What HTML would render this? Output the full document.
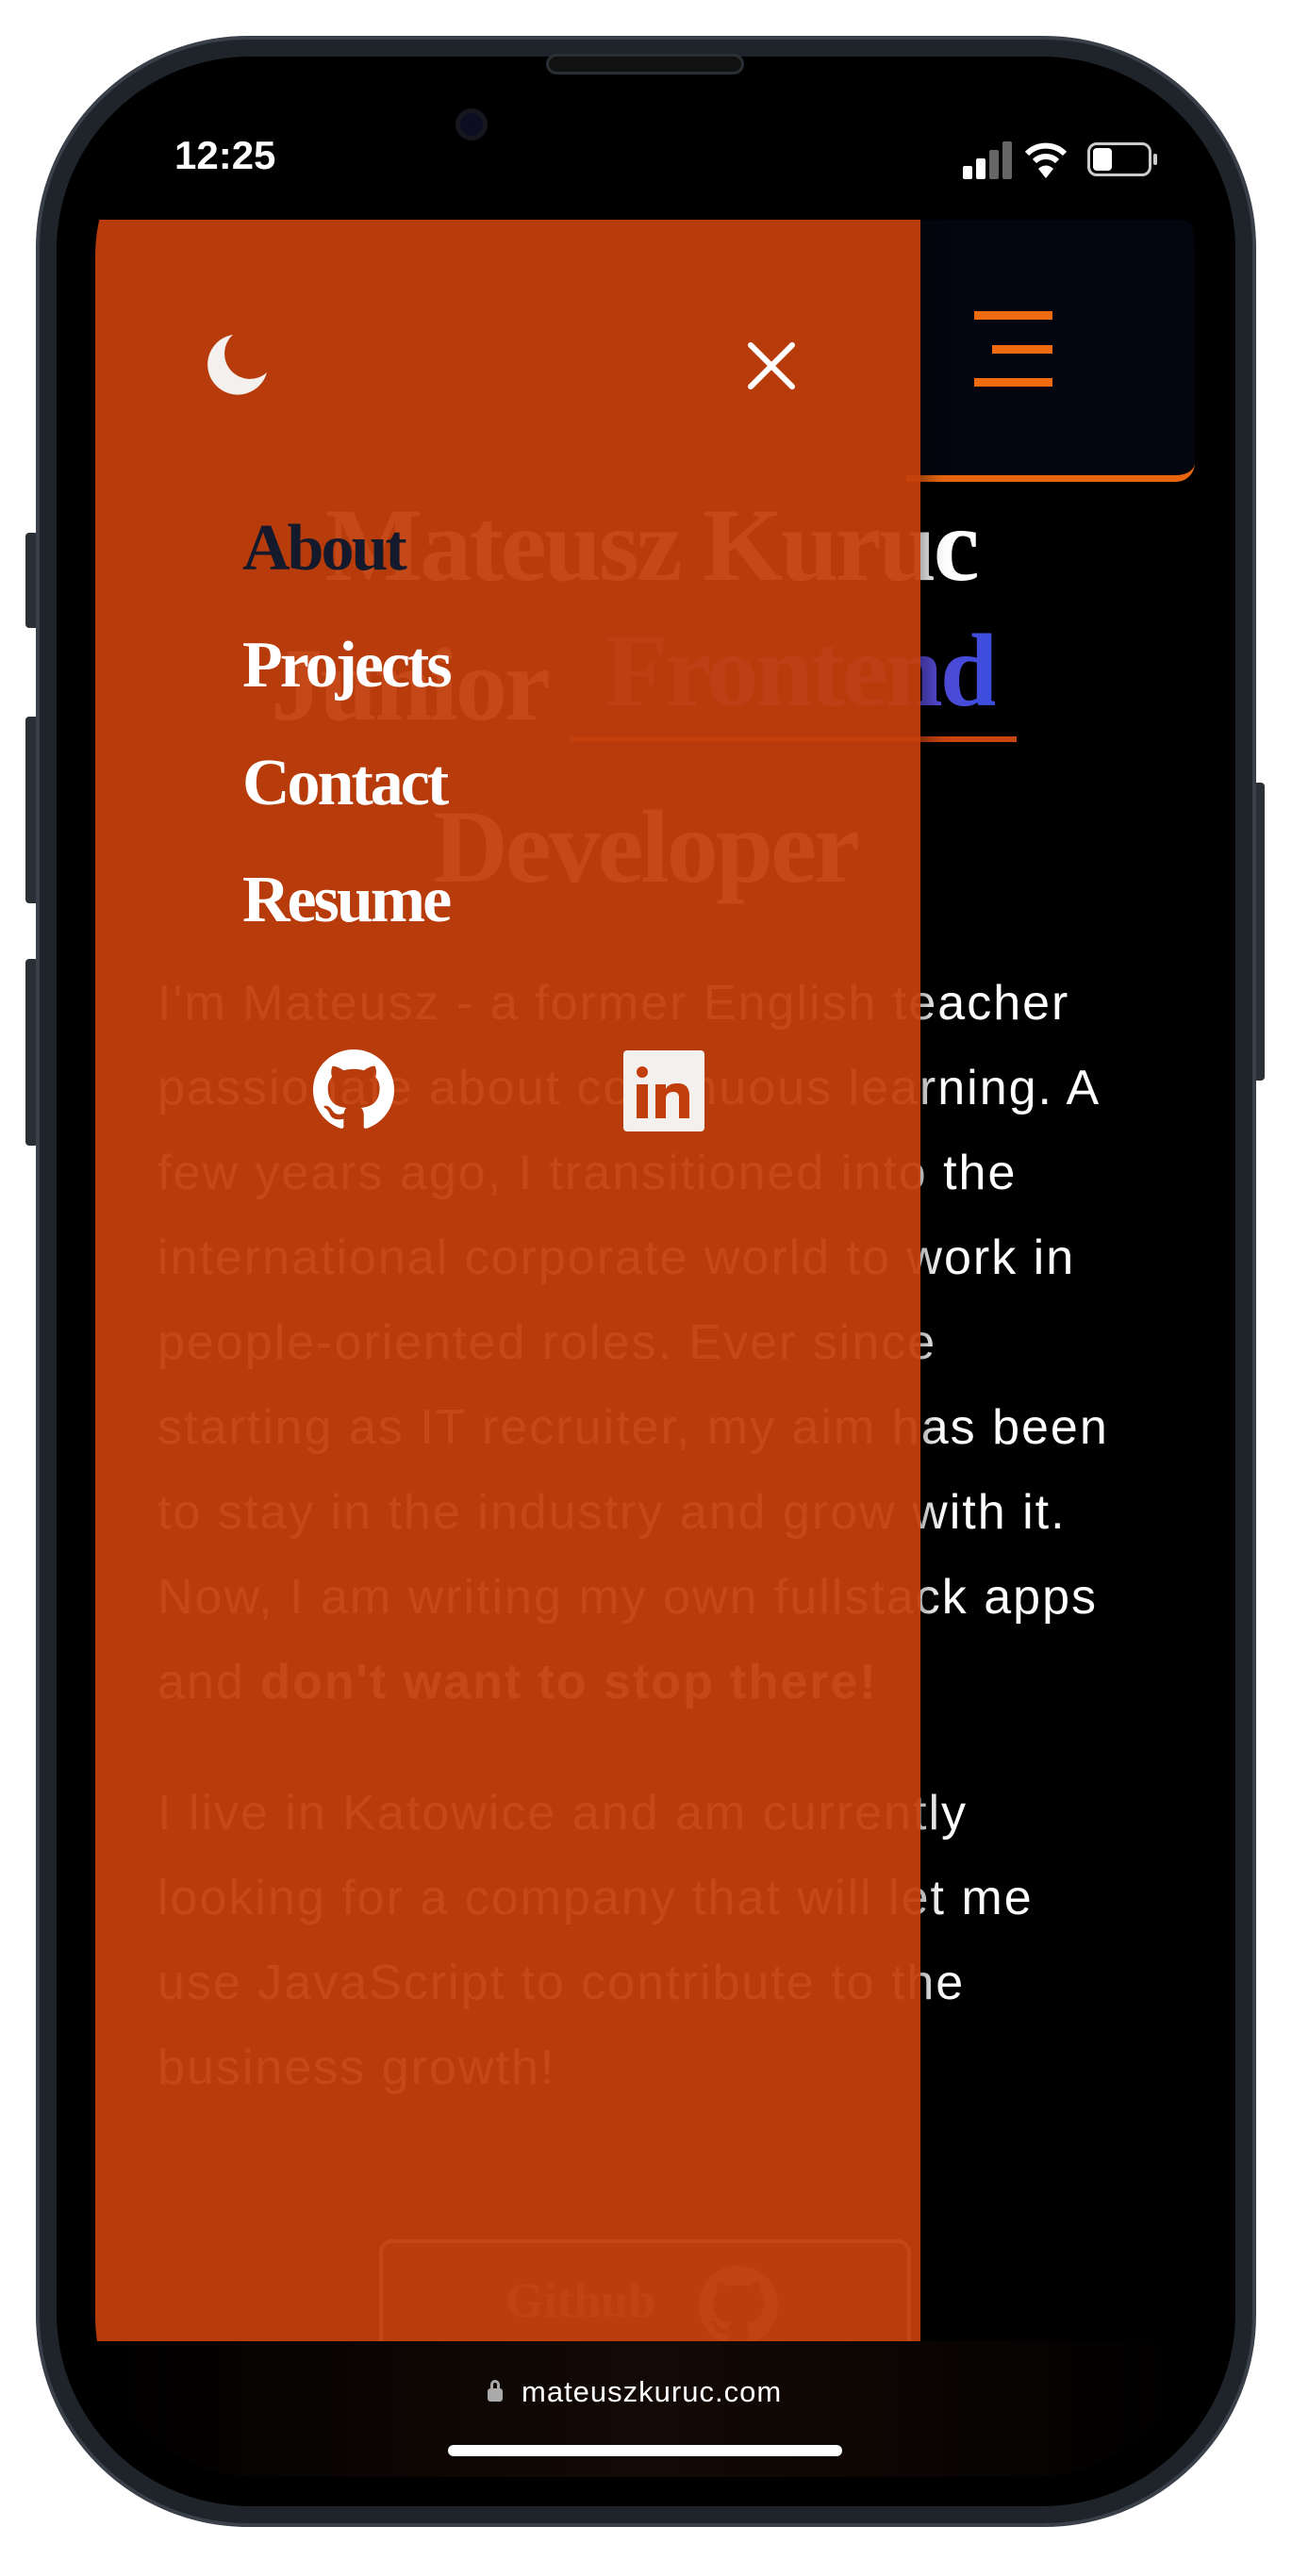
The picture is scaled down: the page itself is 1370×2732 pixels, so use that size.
<!DOCTYPE html>
<html><head><meta charset="utf-8"><style>
*{margin:0;padding:0;box-sizing:border-box}
body{width:1370px;height:2732px;background:#fff;position:relative;overflow:hidden;font-family:"Liberation Sans",sans-serif}
.abs{position:absolute}
.frame{left:38px;top:38px;width:1294px;height:2642px;border-radius:225px;background:#1f242b;border:4px solid #3a4049}
.bezel{left:60px;top:60px;width:1250px;height:2598px;border-radius:205px;background:#000}
.screen{left:101px;top:101px;width:1166px;height:2526px;border-radius:170px;background:#000;overflow:hidden}
.serif{font-family:"Liberation Serif",serif;font-weight:bold}
.hero{width:1166px;left:0;text-align:center;color:#fff;font-size:110px;letter-spacing:-3px;line-height:1}
.p{left:66px;color:#fff;font-family:"Liberation Sans",sans-serif;font-size:52px;letter-spacing:2px;white-space:nowrap;line-height:90px}
.menu{left:156px;font-size:70px;color:#fff;letter-spacing:-3px;line-height:1}
</style></head><body>
<div class="abs" style="left:27px;top:565px;width:14px;height:101px;background:#2a2f36;border-radius:4px"></div>
<div class="abs" style="left:27px;top:760px;width:14px;height:198px;background:#2a2f36;border-radius:4px"></div>
<div class="abs" style="left:27px;top:1017px;width:14px;height:198px;background:#2a2f36;border-radius:4px"></div>
<div class="abs" style="left:1329px;top:830px;width:12px;height:316px;background:#2a2f36;border-radius:4px"></div>
<div class="abs frame"></div>
<div class="abs bezel"></div>
<div class="abs" style="left:579px;top:57px;width:210px;height:22px;border-radius:11px;background:#111;border:3px solid #2a2f36"></div>
<div class="abs screen">
  <div class="abs" style="left:84px;top:40px;color:#fff;font-size:42px;font-weight:bold">12:25</div>
  <div class="abs" style="left:920px;top:75px;width:10px;height:14px;background:#fff;border-radius:2px"></div>
  <div class="abs" style="left:934px;top:67px;width:10px;height:22px;background:#fff;border-radius:2px"></div>
  <div class="abs" style="left:948px;top:58px;width:10px;height:31px;background:#666;border-radius:2px"></div>
  <div class="abs" style="left:962px;top:49px;width:10px;height:40px;background:#666;border-radius:2px"></div>
  <svg class="abs" style="left:985px;top:48px" width="46" height="42" viewBox="0 0 46 42"><path d="M3 14 A28 28 0 0 1 43 14" stroke="#fff" stroke-width="6" fill="none"/><path d="M11 22 A17 17 0 0 1 35 22" stroke="#fff" stroke-width="6" fill="none"/><path d="M23 40 L15 30 A11 11 0 0 1 31 30 Z" fill="#fff"/></svg>
  <div class="abs" style="left:1052px;top:50px;width:68px;height:36px;border:3px solid #ccc;border-radius:10px"></div>
  <div class="abs" style="left:1058px;top:56px;width:20px;height:24px;background:#fff;border-radius:4px"></div>
  <div class="abs" style="left:1122px;top:62px;width:4px;height:12px;background:#ccc;border-radius:2px"></div>
  <div class="abs" style="left:344px;top:-10px;width:508px;height:110px;background:#000;border-radius:0 0 52px 52px"></div>
  <div class="abs" style="left:382px;top:14px;width:34px;height:34px;border-radius:50%;background:#0c0d22;border:5px solid #15161e"></div>

  <div class="abs" style="left:860px;top:132px;width:306px;height:278px;background:#04060f;border-radius:0 14px 20px 0;border-bottom:7px solid #e8650f"></div>
  <div class="abs" style="left:932px;top:229px;width:83px;height:9px;background:#f06a10"></div>
  <div class="abs" style="left:951px;top:265px;width:64px;height:9px;background:#f06a10"></div>
  <div class="abs" style="left:932px;top:300px;width:83px;height:9px;background:#f06a10"></div>

  <div class="abs hero serif" style="top:422px;left:6px">Mateusz Kuruc</div>
  <div class="abs serif" style="left:186px;top:570px;font-size:110px;letter-spacing:-3px;color:#fff;line-height:1">Junior</div>
  <div class="abs serif" style="left:540px;top:555px;font-size:110px;letter-spacing:-3px;line-height:1;color:#6a45c8;background:linear-gradient(90deg,#8a40b0 0%,#6a45c8 70%,#3a4ee0 100%);-webkit-background-clip:text;background-clip:text;-webkit-text-fill-color:transparent">Frontend</div>
  <div class="abs" style="left:504px;top:680px;width:473px;height:6px;background:#c8440f"></div>
  <div class="abs hero serif" style="top:742px">Developer</div>

  <div class="abs p" style="top:918px">I'm Mateusz - a former English teacher<br>passionate about continuous learning. A<br>few years ago, I transitioned into the<br>international corporate world to work in<br>people-oriented roles. Ever since<br>starting as IT recruiter, my aim has been<br>to stay in the industry and grow with it.<br>Now, I am writing my own fullstack apps<br>and <b>don't want to stop there!</b></div>
  <div class="abs p" style="top:1777px">I live in Katowice and am currently<br>looking for a company that will let me<br>use JavaScript to contribute to the<br>business growth!</div>
  <div class="abs" style="left:301px;top:2274px;width:564px;height:150px;border:4px solid #fff;border-radius:14px;background:#4a2010;opacity:0.9"></div>
  <div class="abs serif" style="left:435px;top:2310px;font-size:52px;color:#fff;opacity:0.5">Github</div>
  <svg class="abs" style="left:640px;top:2302px;opacity:0.5" width="84" height="84" viewBox="0 0 16 16"><path fill="#fff" d="M8 0C3.580 0 0 3.58 0 8c0 3.54 2.29 6.530 5.47 7.59.4.07.55-.17.55-.38 0-.19-.01-.82-.01-1.49-2.01.37-2.53-.49-2.69-.94-.09-.23-.48-.94-.82-1.13-.28-.15-.68-.52-.01-.53.63-.01 1.08.58 1.23.82.72 1.21 1.87.87 2.33.66.07-.52.28-.87.51-1.07-1.78-.2-3.64-.89-3.64-3.950 0-.87.31-1.59.82-2.15-.08-.2-.36-1.02.08-2.12 0 0 .67-.21 2.2.82.64-.18 1.32-.27 2-.27.68 0 1.36.09 2 .27 1.53-1.04 2.2-.82 2.2-.82.44 1.1.16 1.92.08 2.12.51.56.82 1.27.82 2.15 0 3.07-1.87 3.75-3.65 3.95.29.25.54.73.54 1.48 0 1.070-.01 1.93-.01 2.2 0 .21.15.46.55.38A8.013 8.013 0 0016 8c0-4.42-3.58-8-8-8z"/></svg>

  <div class="abs" style="left:0;top:132px;width:875px;height:2252px;background:rgba(194,63,12,0.95);box-shadow:8px 0 20px rgba(0,0,0,0.4)"></div>
  <svg class="abs" style="left:118px;top:252px" width="66" height="68" viewBox="0 0 66 68"><path d="M28 2 A32 32 0 1 0 64 42 A26 26 0 0 1 28 2 Z" fill="#f4f0ee"/></svg>
  <svg class="abs" style="left:692px;top:262px" width="50" height="50" viewBox="0 0 50 50"><path d="M3 3 L47 47 M47 3 L3 47" stroke="#fff" stroke-width="6" stroke-linecap="round"/></svg>
  <div class="abs serif menu" style="top:446px;color:#141a2c">About</div>
  <div class="abs serif menu" style="top:570px">Projects</div>
  <div class="abs serif menu" style="top:695px">Contact</div>
  <div class="abs serif menu" style="top:819px">Resume</div>
  <svg class="abs" style="left:231px;top:1012px" width="86" height="86" viewBox="0 0 16 16"><path fill="#fff" d="M8 0C3.580 0 0 3.58 0 8c0 3.54 2.29 6.530 5.47 7.59.4.07.55-.17.55-.38 0-.19-.01-.82-.01-1.49-2.01.37-2.53-.49-2.69-.94-.09-.23-.48-.94-.82-1.13-.28-.15-.68-.52-.01-.53.63-.01 1.08.58 1.23.82.72 1.21 1.87.87 2.33.66.07-.52.28-.87.51-1.07-1.78-.2-3.64-.89-3.64-3.950 0-.87.31-1.59.82-2.15-.08-.2-.36-1.02.08-2.12 0 0 .67-.21 2.2.82.64-.18 1.32-.27 2-.27.68 0 1.36.09 2 .27 1.53-1.04 2.2-.82 2.2-.82.44 1.1.16 1.92.08 2.12.51.56.82 1.27.82 2.15 0 3.07-1.87 3.75-3.65 3.95.29.25.54.73.54 1.48 0 1.070-.01 1.93-.01 2.2 0 .21.15.46.55.38A8.013 8.013 0 0016 8c0-4.42-3.58-8-8-8z"/></svg>
  <div class="abs" style="left:560px;top:1013px;width:86px;height:86px;background:#f4f0ee;border-radius:4px"></div>
  <div class="abs" style="left:574px;top:1030px;width:12px;height:12px;background:#c23f0c;border-radius:50%"></div>
  <div class="abs" style="left:574px;top:1049px;width:12px;height:36px;background:#c23f0c"></div>
  <svg class="abs" style="left:594px;top:1045px" width="40" height="40" viewBox="0 0 40 40"><path d="M0 4 H11 V9 C14 3 20 3 24 3 C32 3 36 8 36 16 V40 H25 V18 C25 14 23 12 19 12 C15 12 11 14 11 19 V40 H0 Z" fill="#c23f0c"/></svg>

  <div class="abs" style="left:0;top:2382px;width:1166px;height:144px;background:linear-gradient(90deg,#000 0%,#140a05 50%,#000 100%)"></div>
  <div class="abs" style="left:416px;top:2432px;width:16px;height:14px;background:#aaa;border-radius:3px"></div>
  <div class="abs" style="left:419px;top:2423px;width:10px;height:14px;border:3px solid #aaa;border-radius:5px 5px 0 0"></div>
  <div class="abs" style="left:452px;top:2418px;color:#fff;font-size:31px;letter-spacing:1px">mateuszkuruc.com</div>
  <div class="abs" style="left:374px;top:2492px;width:418px;height:12px;background:#fff;border-radius:6px"></div>
</div>
</body></html>
